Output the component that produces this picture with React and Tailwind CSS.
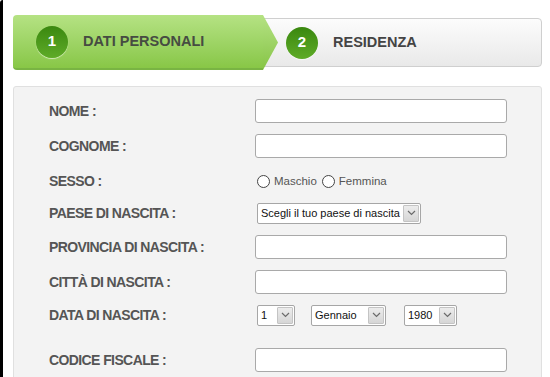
const font = { fontFamily: '"Liberation Sans", Arial, sans-serif' };

const Chevron = () => (
  <svg width="9" height="6" viewBox="0 0 9 6" fill="none">
    <path d="M1 1l3.5 3.5L8 1" stroke="#6b6b6b" strokeWidth="1.2" />
  </svg>
);

// Fake select box: white text area + grey arrow button
const FakeSelect = ({ value, w }) => (
  <div className={`flex h-[21px] ${w} items-stretch rounded-[2px] border border-[#a6a6a6] bg-white`}>
    <span className="flex flex-1 items-center pl-[3px] text-[11px] text-[#111] whitespace-nowrap overflow-hidden">
      {value}
    </span>
    <span className="m-[1px] flex w-[16px] items-center justify-center rounded-[1px] border border-[#c4c4c4] bg-gradient-to-b from-[#ececec] to-[#d6d6d6]">
      <Chevron />
    </span>
  </div>
);

const TextInput = () => (
  <div className="h-[24px] w-[252px] rounded-[3px] border border-[#a9a9a9] bg-white" />
);

const Radio = ({ label }) => (
  <label className="flex items-center gap-[4px] text-[11.5px] text-[#555]">
    <span className="h-[13px] w-[13px] rounded-full border border-[#444] bg-white" />
    <span className="pt-[2px]">{label}</span>
  </label>
);

const Row = ({ label, mt, children }) => (
  <div className={`flex h-[24px] items-center ${mt}`}>
    <div className="w-[206px] text-[14px] font-bold tracking-[-0.6px] text-[#555]">{label}</div>
    {children}
  </div>
);

const StepCircle = ({ n }) => (
  <div className="flex h-[32px] w-[32px] items-center justify-center rounded-full bg-gradient-to-b from-[#3a880f] to-[#5eab27] text-[15px] font-bold text-white shadow-[0_1px_1px_rgba(255,255,255,0.6)]">
    {n}
  </div>
);

export default function App() {
  return (
    <div style={font} className="flex h-[377px] w-[550px] overflow-hidden bg-white">
      <div className="w-[3px] rounded-tl-[6px] bg-black" />
      <div className="flex-1 pl-[10px] pr-[8px] pt-[15px]">
        {/* wizard steps */}
        <div className="flex h-[55px] items-center">
          <div className="flex h-[55px] w-[250px] items-center gap-[15px] rounded-l-[4px] border-b-2 border-[#79b443] bg-gradient-to-b from-[#b5e283] to-[#88c746] pl-[23px]">
            <StepCircle n="1" />
            <span className="text-[14.5px] font-bold text-[#464c42]">DATI PERSONALI</span>
          </div>
          <div className="z-10 h-[55px] w-[15px] bg-gradient-to-b from-[#b5e283] to-[#86c444] [clip-path:polygon(0_0,0_100%,100%_50%)]" />
          <div className="-ml-[15px] flex h-[49px] flex-1 items-center gap-[15px] rounded-r-[4px] border border-[#cfcfcf] bg-gradient-to-b from-[#fcfcfc] to-[#e9e9e9] pl-[22px]">
            <StepCircle n="2" />
            <span className="text-[14.5px] font-bold text-[#444]">RESIDENZA</span>
          </div>
        </div>

        {/* form panel */}
        <div className="mt-[16px] h-[300px] rounded-[3px] border border-[#e0e0e0] bg-[#f3f3f3] pl-[35px] pt-[12px]">
          <Row label="NOME :" mt="mt-0">
            <TextInput />
          </Row>
          <Row label="COGNOME :" mt="mt-[11px]">
            <TextInput />
          </Row>
          <Row label="SESSO :" mt="mt-[11px]">
            <div className="flex items-center gap-[5px] pl-[2px]">
              <Radio label="Maschio" />
              <Radio label="Femmina" />
            </div>
          </Row>
          <Row label="PAESE DI NASCITA :" mt="mt-[8px]">
            <div className="pl-[2px]">
              <FakeSelect value="Scegli il tuo paese di nascita" w="w-[164px]" />
            </div>
          </Row>
          <Row label="PROVINCIA DI NASCITA :" mt="mt-[10px]">
            <TextInput />
          </Row>
          <Row label="CITTÀ DI NASCITA :" mt="mt-[11px]">
            <TextInput />
          </Row>
          <Row label="DATA DI NASCITA :" mt="mt-[9px]">
            <div className="flex items-center pl-[2px]">
              <FakeSelect value="1" w="w-[38px]" />
              <div className="ml-[16px]">
                <FakeSelect value="Gennaio" w="w-[75px]" />
              </div>
              <div className="ml-[18px]">
                <FakeSelect value="1980" w="w-[53px]" />
              </div>
            </div>
          </Row>
          <Row label="CODICE FISCALE :" mt="mt-[21px]">
            <TextInput />
          </Row>
        </div>
      </div>
    </div>
  );
}
